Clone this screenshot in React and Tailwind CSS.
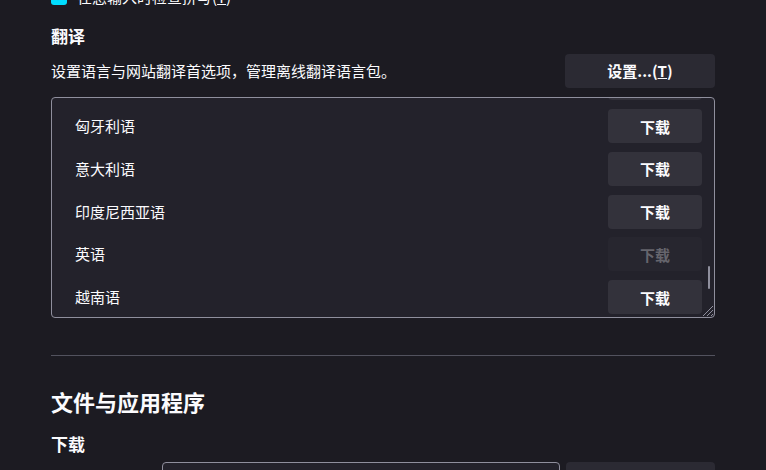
import React from 'react';

const SPRACHEN = [
  { name: '西班牙语' },
  { name: '匈牙利语' },
  { name: '意大利语' },
  { name: '印度尼西亚语' },
  { name: '英语', aus: true },
  { name: '越南语' },
];

const font = { fontFamily: '"Noto Sans CJK SC", "Noto Sans", sans-serif' };

function Knopf({ children, aus, className = '' }) {
  return (
    <button
      disabled={aus}
      className={`h-[34px] rounded-[4px] text-[15px] font-bold leading-none flex items-center justify-center ${aus ? 'bg-[#27262f] text-[#66656d]' : 'bg-[#33323b] text-[#fbfbfe]'} ${className}`}
    >
      {children}
    </button>
  );
}

export default function App() {
  return (
    <div className="w-[766px] h-[470px] overflow-hidden bg-[#1c1b22] text-[#fbfbfe]" style={font}>
      <div className="px-[51px] -mt-[11px]">
        <div className="flex items-center h-4 gap-[10px]">
          <span className="w-4 h-4 rounded-[3px] bg-[#00ddff] flex items-center justify-center">
            <svg width="10" height="10" viewBox="0 0 10 10"><path d="M2 5l2 2 4-4" stroke="#1c1b22" strokeWidth="1.6" fill="none" /></svg>
          </span>
          <span className="text-[15px] leading-4">在您输入时检查拼写(<u>T</u>)</span>
        </div>

        <h2 className="mt-[19px] text-[17px] font-bold leading-[24px]">翻译</h2>

        <div className="mt-[6px] flex items-center justify-between h-[34px]">
          <p className="text-[15px] leading-[22px]">设置语言与网站翻译首选项，管理离线翻译语言包。</p>
          <button className="w-[150px] h-[34px] rounded-[4px] bg-[#2b2a33] text-[15px] font-bold">设置...(<u>T</u>)</button>
        </div>

        <div className="relative mt-[9px] h-[221px] border border-[#8f8f9d] rounded-[4px] bg-[#23222b] overflow-hidden">
          <div className="-mt-[36px]">
            {SPRACHEN.map((s) => (
              <div key={s.name} className="h-[42.75px] flex items-center justify-between pl-[23px] pr-[12px]">
                <span className="text-[15px] leading-[22px]">{s.name}</span>
                <Knopf aus={s.aus} className="w-[94px]">下载</Knopf>
              </div>
            ))}
          </div>
          <div className="absolute right-[4px] top-[168px] w-[2px] h-[23px] rounded-full bg-[#8f8f9d]" />
          <svg className="absolute right-0 bottom-0" width="13" height="13" viewBox="0 0 13 13">
            <path d="M12 2L2 12M12 6L6 12M12 10L10 12" stroke="#8f8f9d" strokeWidth="1" />
          </svg>
        </div>

        <div className="mt-[37px] h-px bg-[#52525e]" />

        <h1 className="mt-[29px] text-[22px] font-bold leading-[32px]">文件与应用程序</h1>

        <h2 className="mt-[15px] text-[17px] font-bold leading-[24px]">下载</h2>

        <div className="mt-[6px] flex items-start">
          <span className="w-[111px] text-[15px] leading-[34px]">保存文件至</span>
          <div className="w-[398px] h-[34px] border border-[#8f8f9d] rounded-[4px] bg-[#23222b]" />
          <button className="ml-[6px] w-[149px] h-[34px] rounded-[4px] bg-[#2b2a33] text-[15px] font-bold">浏览...</button>
        </div>
      </div>
    </div>
  );
}
